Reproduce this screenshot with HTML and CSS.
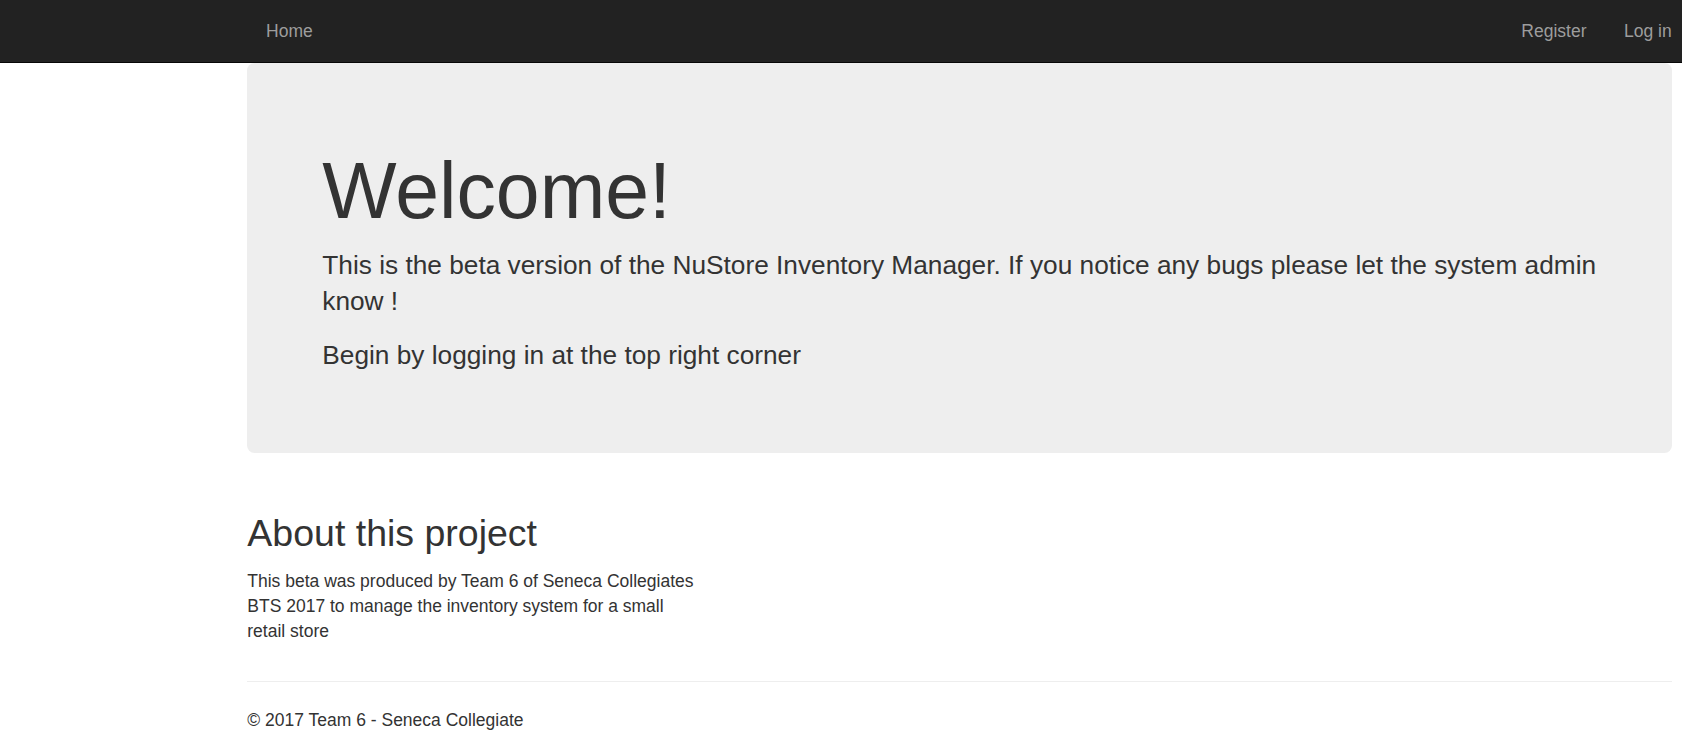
FILE: index.html
```html
<!DOCTYPE html>
<html lang="en">
<head>
<meta charset="utf-8">
<title>Home Page - NuStore Inventory Manager</title>
<link rel="stylesheet" href="styles.css">
</head>
<body>
<nav class="navbar">
  <div class="container nav-inner">
    <ul class="nav">
      <li><a href="#">Home</a></li>
    </ul>
    <ul class="nav nav-right">
      <li><a href="#">Register</a></li>
      <li><a href="#">Log in</a></li>
    </ul>
  </div>
</nav>
<div class="container body-content">
  <div class="jumbotron">
    <h1>Welcome!</h1>
    <p class="lead">This is the beta version of the NuStore Inventory Manager. If you notice any bugs please let the system admin know !</p>
    <p class="lead">Begin by logging in at the top right corner</p>
  </div>
  <div class="row">
    <div class="col">
      <h2>About this project</h2>
      <p>This beta was produced by Team 6 of Seneca Collegiates BTS 2017 to manage the inventory system for a small retail store</p>
    </div>
  </div>
  <hr class="rule">
  <footer class="footer">
    <p>&copy; 2017 Team 6 - Seneca Collegiate</p>
  </footer>
</div>
</body>
</html>
```
FILE: styles.css
```css
html, body {
  margin: 0;
  padding: 0;
}
body {
  font-family: "Liberation Sans", Arial, Helvetica, sans-serif;
  font-size: 17.5px;
  line-height: 25px;
  color: #333;
  background: #fff;
  overflow: hidden;
}
.container {
  width: 1424.4px;
  margin-left: 247.3px;
  box-sizing: border-box;
}
.navbar {
  background: #222;
  border-bottom: 1px solid #080808;
  height: 62px;
}
.nav-inner {
  display: flex;
  justify-content: space-between;
  height: 62px;
}
.nav {
  list-style: none;
  margin: 0;
  padding: 0;
  display: flex;
}
.nav-right {
  margin-right: -18.75px;
}
.nav a {
  display: block;
  padding: 18.75px 18.75px;
  font-size: 17.5px;
  line-height: 25px;
  color: #9d9d9d;
  text-decoration: none;
}
.nav-inner > .nav:first-child a {
  margin-left: -18.75px;
  padding-left: 37.5px;
}
.jumbotron {
  background: #eee;
  border-radius: 7.5px;
  padding: 59.5px 75px 62px;
  margin-bottom: 37.5px;
}
.jumbotron h1 {
  font-size: 78.75px;
  line-height: 1.1;
  font-weight: 500;
  margin: 25px 0 12.5px;
  color: #333;
}
.jumbotron p {
  font-size: 26.25px;
  line-height: 36px;
  margin: 0 0 18px;
}
.row {
  display: flex;
}
.col {
  width: 450px;
}
.col h2 {
  font-size: 37.5px;
  line-height: 1.1;
  font-weight: 500;
  margin: 23px 0 15px;
}
.col p {
  margin: 0 0 12px;
}
.rule {
  border: 0;
  border-top: 1px solid #eee;
  margin: 25px 0 25.5px;
  height: 0;
}
.footer p {
  margin: 0;
}
```
